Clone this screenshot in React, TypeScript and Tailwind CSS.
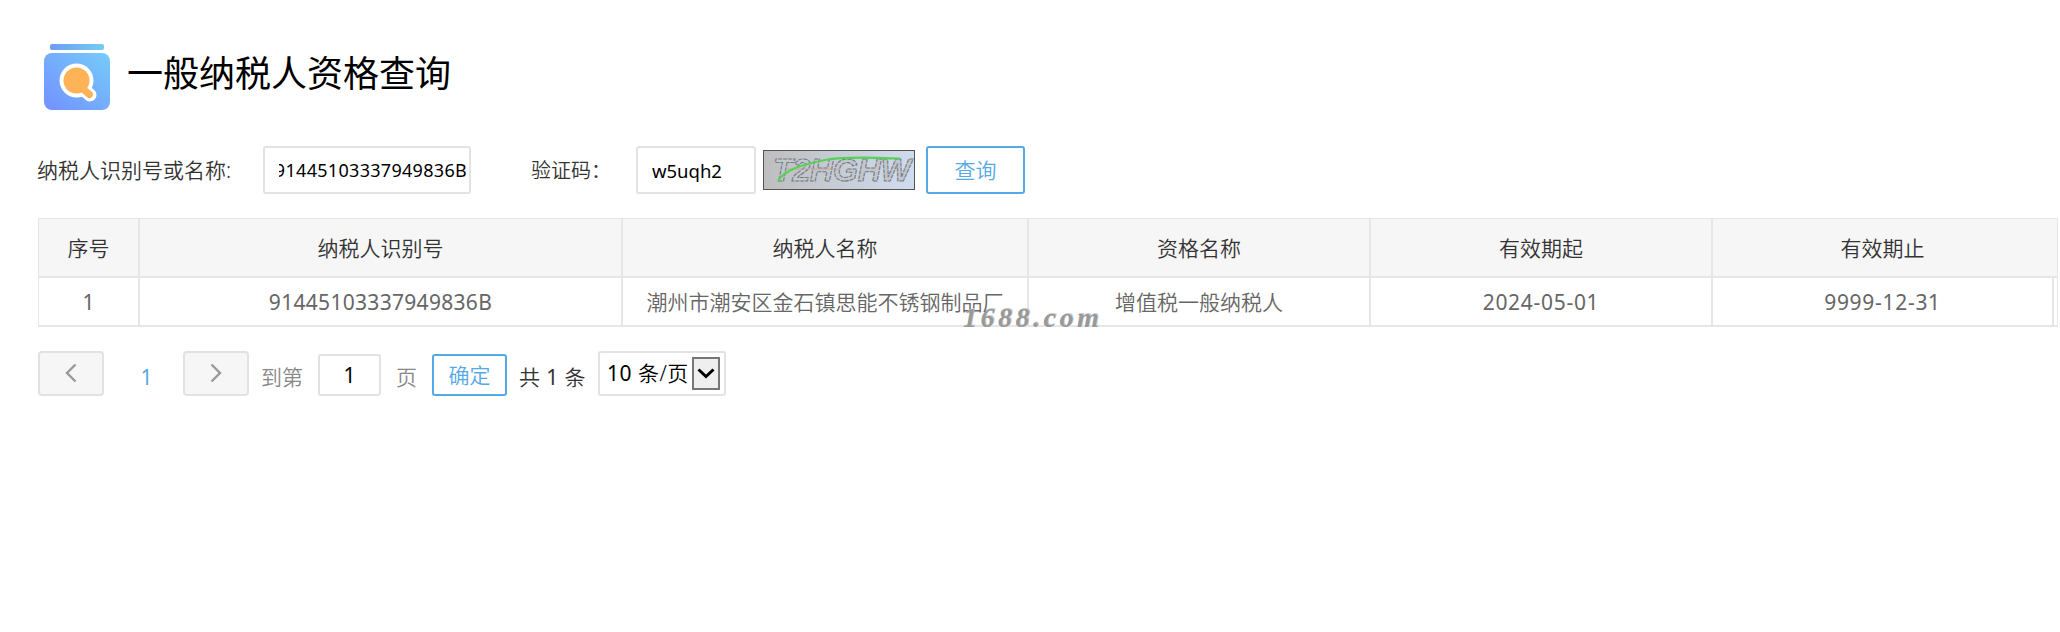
import clsx from "clsx"

interface Column {
  title: string
  value: string
  width: string
  spacing?: string
}

const columns: Column[] = [
  { title: "序号", value: "1", width: "w-[101px]", spacing: "tracking-normal" },
  { title: "纳税人识别号", value: "91445103337949836B", width: "w-[483px]", spacing: "tracking-[0.3px]" },
  { title: "纳税人名称", value: "潮州市潮安区金石镇思能不锈钢制品厂", width: "w-[406px]" },
  { title: "资格名称", value: "增值税一般纳税人", width: "w-[342px]" },
  { title: "有效期起", value: "2024-05-01", width: "w-[342px]", spacing: "tracking-[0.7px]" },
  { title: "有效期止", value: "9999-12-31", width: "w-[341px]", spacing: "tracking-[0.7px]" },
]

const LogoIcon = () => (
  <svg width="68" height="68" viewBox="0 0 68 68" className="shrink-0">
    <defs>
      <linearGradient id="bar" x1="0" y1="0" x2="1" y2="0">
        <stop offset="0" stopColor="#709cf5" />
        <stop offset="1" stopColor="#74cdf2" />
      </linearGradient>
      <linearGradient id="body" x1="0" y1="1" x2="1" y2="0">
        <stop offset="0" stopColor="#7290ff" />
        <stop offset="1" stopColor="#76ccfa" />
      </linearGradient>
    </defs>
    <rect x="7" y="1" width="54" height="6" rx="2" fill="url(#bar)" />
    <rect x="1" y="10" width="66" height="57" rx="8" fill="url(#body)" />
    <path d="M40 46 L47 52" stroke="#fff" strokeWidth="13" strokeLinecap="round" />
    <circle cx="33.500" cy="37.500" r="17" fill="#fff" />
    <circle cx="33.500" cy="37.500" r="13" fill="#ffb357" />
    <path d="M40 46 L46.500 51.500" stroke="#ffb357" strokeWidth="7" strokeLinecap="round" />
  </svg>
)

const Captcha = () => (
  <svg width="152" height="40" viewBox="0 0 152 40" className="ml-[7px] shrink-0">
    <defs>
      <linearGradient id="captcha" x1="0" y1="0" x2="1" y2="0">
        <stop offset="0" stopColor="#bebebe" />
        <stop offset="1" stopColor="#cfdcee" />
      </linearGradient>
    </defs>
    <rect x="0.5" y="0.5" width="151" height="39" fill="url(#captcha)" stroke="#555" />
    <text
      x="10"
      y="31"
      textLength="138"
      fontSize="32"
      fontStyle="italic"
      fontWeight="700"
      fontFamily="Liberation Sans, sans-serif"
      fill="#c2c6cd"
      stroke="#777b82"
      strokeWidth="1.1"
      strokeDasharray="4 1"
    >
      T2HGHW
    </text>
    <path d="M24 19 H76" stroke="#c99" strokeWidth="0.8" />
    <path d="M15 31 C22 19 42 14 62 10 C85 6 112 8 137 8.500" fill="none" stroke="#55d355" strokeWidth="2.2" />
  </svg>
)

const Arrow = ({ flip }: { flip?: boolean }) => (
  <svg width="12" height="20" viewBox="0 0 12 20" className={clsx("-mt-[2px]", flip && "rotate-180")}>
    <path d="M10.500 1.500 L2 10 L10.500 18.500" fill="none" stroke="#999" strokeWidth="2.4" />
  </svg>
)

const pageButton =
  "flex h-[45px] w-[66px] items-center justify-center rounded-[4px] border-2 border-[#e2e2e2] bg-[#f6f6f6]"

const Header = () => (
  <header className="flex pl-[43px] pt-[43px]">
    <LogoIcon />
    <h1 className="ml-[16px] mt-[5px] text-[36px] font-normal leading-[52px] text-black">一般纳税人资格查询</h1>
  </header>
)

const SearchBar = () => (
  <div className="mt-[35px] flex h-[48px] items-center pl-[37px]">
    <label className="w-[226px] pt-[2px] text-[21px] text-[#333]">纳税人识别号或名称:</label>
    <div className="h-[48px] w-[208px] rounded-[3px] border-2 border-[#e3e3e3] pl-[14px] pr-[2px]">
      {/* the value is longer than the field, so it shows its end */}
      <div className="flex h-full items-center justify-end overflow-hidden font-normal text-[18px] tracking-[0.3px] text-black">
        <span className="shrink-0">91445103337949836B</span>
      </div>
    </div>
    <label className="ml-[60px] w-[105px] pt-[2px] text-[20px] text-[#333]">验证码：</label>
    <div className="flex h-[48px] w-[120px] items-center rounded-[3px] border-2 border-[#e3e3e3] pl-[14px] pt-px text-[18.500px] font-normal text-black">
      w5uqh2
    </div>
    <Captcha />
    <button className="ml-[11px] h-[48px] w-[99px] rounded-[3px] border-2 border-[#56a9e6] pt-px text-[21px] text-[#56a9e6]">
      查询
    </button>
  </div>
)

const ResultTable = () => (
  <div className="relative ml-[38px] mt-[24px] w-[2020px] border-x border-t border-[#e6e6e6]">
    <div className="flex h-[59px] border-b-2 border-[#e6e6e6] bg-[#f6f6f6]">
      {columns.map((col) => (
        <div
          key={col.title}
          className={clsx(
            "flex shrink-0 items-center justify-center border-r-2 border-[#e6e6e6] pt-[2px] text-[21px] text-[#333] last:border-r-transparent",
            col.width
          )}
        >
          {col.title}
        </div>
      ))}
    </div>
    <div className="flex h-[49px] border-b-2 border-[#e6e6e6]">
      {columns.map((col) => (
        <div
          key={col.title}
          className={clsx(
            "flex shrink-0 items-center justify-center border-r-2 border-[#e6e6e6] pt-[2px] text-[21px] text-[#666]",
            col.spacing && "font-normal",
            col.spacing,
            col.width
          )}
        >
          {col.value}
        </div>
      ))}
    </div>
    {/* watermark */}
    <span className="absolute left-[924px] top-[81px] whitespace-nowrap font-['Liberation_Serif',serif] text-[28px] font-bold italic leading-[36px] tracking-[3.5px] text-[#999] [text-shadow:1px_-1px_0_#ccc]">
      1688.com
    </span>
  </div>
)

const Pagination = () => (
  <div className="mt-[24px] flex h-[45px] items-end pl-[38px] text-[21px]">
    <button className={pageButton}>
      <Arrow />
    </button>
    <span className="w-[79px] pl-[6px] text-center font-normal leading-[38px] text-[#56a9e6]">1</span>
    <button className={pageButton}>
      <Arrow flip />
    </button>
    <span className="ml-[12px] leading-[37px] text-[#888]">到第</span>
    <div className="ml-[15px] flex h-[42px] w-[63px] items-center justify-center rounded-[3px] border-2 border-[#e2e2e2] pt-[2px] font-normal text-black">
      1
    </div>
    <span className="ml-[15px] leading-[37px] text-[#888]">页</span>
    <button className="ml-[15px] h-[42px] w-[75px] rounded-[3px] border-2 border-[#56a9e6] pt-[1px] text-[#56a9e6]">
      确定
    </button>
    <span className="ml-[12px] w-[79px] whitespace-nowrap leading-[38px] tracking-[0.4px] text-[#333]">
      共 <span className="font-normal">1</span> 条
    </span>
    <div className="flex h-[45px] w-[128px] items-center rounded-[3px] border-2 border-[#e3e3e3] pl-[7px] text-black">
      <span className="w-[85px] whitespace-nowrap tracking-[0.5px]">
        <span className="font-normal">10</span> 条/页
      </span>
      <div className="flex h-[33px] w-[28px] items-center justify-center border-2 border-[#777] bg-[#efefef]">
        <svg width="18" height="12" viewBox="0 0 18 12">
          <path d="M1.500 1.500 L9 8.500 L16.500 1.500" fill="none" stroke="#000" strokeWidth="3" />
        </svg>
      </div>
    </div>
  </div>
)

const App = () => {
  return (
    <div className="h-[632px] w-[2060px] overflow-hidden bg-white font-['Noto_Sans','Noto_Sans_CJK_SC',sans-serif] font-[350]">
      <Header />
      <SearchBar />
      <ResultTable />
      <Pagination />
    </div>
  )
}

export default App
